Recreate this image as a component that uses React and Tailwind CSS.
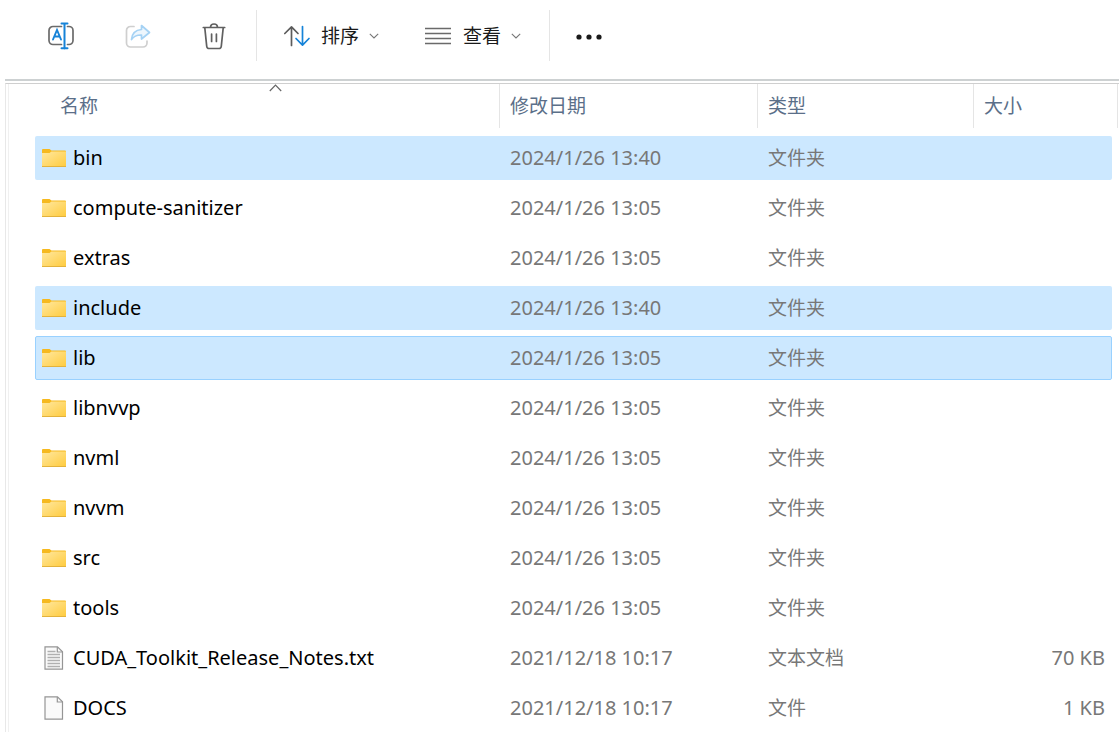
import { useState } from 'react'

const FILES = [
  { name: 'bin', date: '2024/1/26 13:40', type: '文件夹', icon: 'folder' },
  { name: 'compute-sanitizer', date: '2024/1/26 13:05', type: '文件夹', icon: 'folder' },
  { name: 'extras', date: '2024/1/26 13:05', type: '文件夹', icon: 'folder' },
  { name: 'include', date: '2024/1/26 13:40', type: '文件夹', icon: 'folder' },
  { name: 'lib', date: '2024/1/26 13:05', type: '文件夹', icon: 'folder' },
  { name: 'libnvvp', date: '2024/1/26 13:05', type: '文件夹', icon: 'folder' },
  { name: 'nvml', date: '2024/1/26 13:05', type: '文件夹', icon: 'folder' },
  { name: 'nvvm', date: '2024/1/26 13:05', type: '文件夹', icon: 'folder' },
  { name: 'src', date: '2024/1/26 13:05', type: '文件夹', icon: 'folder' },
  { name: 'tools', date: '2024/1/26 13:05', type: '文件夹', icon: 'folder' },
  { name: 'CUDA_Toolkit_Release_Notes.txt', date: '2021/12/18 10:17', type: '文本文档', size: '70 KB', icon: 'text' },
  { name: 'DOCS', date: '2021/12/18 10:17', type: '文件', size: '1 KB', icon: 'file' }
]

const RenameIcon = () => (
  <svg width="28" height="28" viewBox="0 0 28 28" fill="none" strokeLinecap="round">
    <path d="M14.500 4.500H6a4 4 0 0 0-4 4v10a4 4 0 0 0 4 4h8.500M20.500 4.500H22a4 4 0 0 1 4 4v10a4 4 0 0 1-4 4h-1.500" stroke="#6b6b6b" strokeWidth="1.700" />
    <path d="M6 17.500 10 8 14 17.500M7.300 14.500h5.400" stroke="#1683d8" strokeWidth="1.900" />
    <path d="M14.500 1.500h6M17.500 1.500v25M14.500 26.300h6" stroke="#1683d8" strokeWidth="2" />
  </svg>
)

const ShareIcon = () => (
  <svg width="26" height="26" viewBox="0 0 26 26" fill="none" strokeLinecap="round" strokeLinejoin="round">
    <path d="M9 3.500H5.500a4 4 0 0 0-4 4v12.500a4 4 0 0 0 4 4h12.500a4 4 0 0 0 4-4v-2" stroke="#cfcfcf" strokeWidth="1.700" />
    <path d="M16.500 2.500 24.500 9.500 16.500 16v-4C12 11.800 9 13 6.500 16.500 7 10.500 10.500 7 16.500 6.500z" fill="#edf6fd" stroke="#a5d2f4" strokeWidth="1.700" />
  </svg>
)

const DeleteIcon = () => (
  <svg width="26" height="28" viewBox="0 0 26 28" fill="none" strokeLinecap="round" strokeLinejoin="round" stroke="#606060">
    <path d="M2.300 5.500h21.400M9.500 5C9.700 1 16.300 1 16.500 5M3.800 5.800 5.700 24.200a2.500 2.500 0 0 0 2.500 2.300h9.600a2.500 2.500 0 0 0 2.500-2.300L22.200 5.800" strokeWidth="1.700" />
    <path d="M10.600 12v7.500M15.400 12v7.500" strokeWidth="1.700" />
  </svg>
)

const SortIcon = () => (
  <svg width="28" height="22" viewBox="0 0 28 22" fill="none" strokeLinecap="round" strokeLinejoin="round" strokeWidth="1.700">
    <path d="M8.500 20.500V2M1.800 8.500 8.500 1.800 15 8.500" stroke="#5c5c5c" />
    <path d="M19.500 1.500v18.500M13 13.500l6.500 6.700 6.500-6.700" stroke="#1683d8" />
  </svg>
)

const ViewIcon = () => (
  <svg width="26" height="18" viewBox="0 0 26 18" stroke="#6a6a6a" strokeWidth="1.600">
    <path d="M0 1.500h26M0 6.500h26M0 11.500h26M0 16.500h26" />
  </svg>
)

const ChevronIcon = () => (
  <svg width="10" height="6" viewBox="0 0 10 6" fill="none" stroke="#777" strokeWidth="1.100">
    <path d="M.8.800 5 5 9.200.8" />
  </svg>
)

const MoreIcon = () => (
  <svg width="26" height="6" viewBox="0 0 26 6" fill="#1a1a1a">
    <circle cx="3" cy="3" r="2.600" />
    <circle cx="13" cy="3" r="2.600" />
    <circle cx="23" cy="3" r="2.600" />
  </svg>
)

const FolderIcon = () => (
  <svg width="24" height="20" viewBox="0 0 24 20">
    <defs>
      <linearGradient id="folderFill" x1="0" y1="0" x2="1" y2="1">
        <stop offset="0" stopColor="#ffe8a0" />
        <stop offset="1" stopColor="#ffcb3d" />
      </linearGradient>
    </defs>
    <path d="M0 2a1 1 0 0 1 1-1h6.500L9.500 2.500h13.500a1 1 0 0 1 1 1V8H0z" fill="#f6b91f" />
    <path d="M0 5h7.500l2-1.500H24V18a1 1 0 0 1-1 1H1a1 1 0 0 1-1-1z" fill="url(#folderFill)" />
    <path d="M0 18.500h24" stroke="#e3b23c" />
  </svg>
)

const FileIcon = ({ lines }) => (
  <svg width="20" height="24" viewBox="0 0 20 24" fill="none">
    <path d="M1 .8h12.500L18.500 5.800v17.400H1z" fill="#fafafa" stroke="#959595" strokeWidth="1.200" />
    <path d="M13.300 1v5h5" stroke="#959595" strokeWidth="1.200" />
    {lines && <path d="M3.500 5.500h8M3.500 8.500h12.500M3.500 11.500h12.500M3.500 14.500h12.500M3.500 17.500h12.500M3.500 20.500h12.500" stroke="#b0b0b0" strokeWidth="1.600" />}
  </svg>
)

const ToolbarDivider = () => <div className="h-[51px] w-px bg-[#e5e5e5]" />

const FileRow = ({ file, selected, focused, onSelect }) => (
  <tr
    onClick={onSelect}
    aria-selected={selected}
    className={`grid h-11 grid-cols-[464px_258px_216px_1fr] items-center rounded-xs border ${
      focused ? 'border-[#99d1ff]' : 'border-transparent'
    } ${selected ? 'bg-[#cce8ff]' : 'bg-white'}`}
  >
    <td className="flex items-center gap-[7px] pl-1.5 text-black">
      <span className="flex w-6 justify-center">
        {file.icon === 'folder' ? <FolderIcon /> : <FileIcon lines={file.icon === 'text'} />}
      </span>
      {file.name}
    </td>
    <td className="pl-2.5">{file.date}</td>
    <td className="pl-2.5 text-[19px]">{file.type}</td>
    <td className="pr-1.5 text-right">{file.size}</td>
  </tr>
)

const App = () => {
  const [selected, setSelected] = useState(['bin', 'include', 'lib'])
  const [focused, setFocused] = useState('lib')

  const handleSelect = (name) => {
    setSelected([name])
    setFocused(name)
  }

  return (
    <div className="min-h-screen bg-white font-['Noto_Sans','Noto_Sans_CJK_SC',sans-serif]">
      {/* 工具栏 */}
      <div className="flex h-[79px] items-start pt-2.5">
        <div className="flex h-[52px] items-center gap-[50px] pr-[29px] pl-[47px]">
          <button type="button" aria-label="重命名"><RenameIcon /></button>
          <button type="button" aria-label="共享" disabled><ShareIcon /></button>
          <button type="button" aria-label="删除"><DeleteIcon /></button>
        </div>
        <ToolbarDivider />
        <div className="flex h-[52px] items-center gap-[46px] pr-7 pl-[26px] text-[19px] text-[#1a1a1a]">
          <button type="button" className="flex items-center gap-2.5">
            <SortIcon />
            排序
            <ChevronIcon />
          </button>
          <button type="button" className="flex items-center gap-2.5">
            <ViewIcon />
            <span className="pl-0.5">查看</span>
            <ChevronIcon />
          </button>
        </div>
        <ToolbarDivider />
        <button type="button" aria-label="更多" className="flex h-[53px] items-center px-[26px]">
          <MoreIcon />
        </button>
      </div>

      {/* 文件列表 */}
      <div className="ml-[5px] border-t-2 border-[#cdd1d2] pt-0.5">
        <div className="border-t border-l border-t-[#cfcfcf] border-l-[#e8e8e8] pl-0.5">
          <div className="border-l border-[#f0f0f0] pb-1 pl-[26px]">
            <table className="block text-[20px] leading-7 text-[#777777]">
              <thead className="block">
                <tr className="grid h-11 grid-cols-[465px_258px_216px_1fr] text-left text-[19px] text-[#5b6f89]">
                  <th className="relative flex items-center border-r border-[#e5e5e5] pl-[25px] font-normal">
                    名称
                    <svg className="absolute top-0 left-[234px]" width="13" height="8" viewBox="0 0 13 8" fill="none" stroke="#666" strokeWidth="1.200">
                      <path d="M.8 7 6.500 1.200 12.200 7" />
                    </svg>
                  </th>
                  <th className="flex items-center border-r border-[#e5e5e5] pl-2.5 font-normal">修改日期</th>
                  <th className="flex items-center border-r border-[#e5e5e5] pl-2.5 font-normal">类型</th>
                  <th className="mr-px flex items-center border-r border-[#e5e5e5] pl-2.5 font-normal">大小</th>
                </tr>
              </thead>
              <tbody className="flex flex-col gap-1.5 pt-2 pr-[7px]">
                {FILES.map((file) => (
                  <FileRow
                    key={file.name}
                    file={file}
                    selected={selected.includes(file.name)}
                    focused={focused === file.name}
                    onSelect={() => handleSelect(file.name)}
                  />
                ))}
              </tbody>
            </table>
          </div>
        </div>
      </div>
    </div>
  )
}

export default App
